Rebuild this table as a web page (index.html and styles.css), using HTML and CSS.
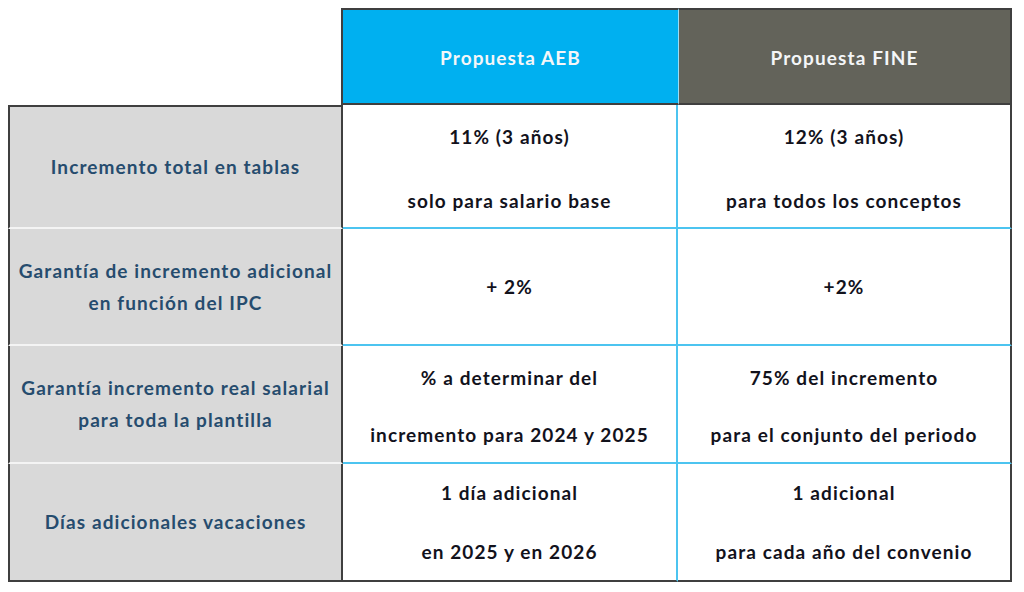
FILE: index.html
```html
<!DOCTYPE html>
<html lang="es">
<head>
<meta charset="utf-8">
<title>Propuestas AEB y FINE</title>
<link rel="stylesheet" href="styles.css">
</head>
<body>
<div class="sheet">
  <div class="corner"></div>
  <div class="head head-aeb">Propuesta AEB</div>
  <div class="head head-fine">Propuesta FINE</div>

  <div class="label label-first">Incremento total en tablas</div>
  <div class="cell cell-aeb cell-r1"><p>11% (3 años)</p><p>solo para salario base</p></div>
  <div class="cell cell-fine cell-r1"><p>12% (3 años)</p><p>para todos los conceptos</p></div>

  <div class="label label-two">Garantía de incremento adicional<br>en función del IPC</div>
  <div class="cell cell-aeb"><p>+ 2%</p></div>
  <div class="cell cell-fine"><p>+2%</p></div>

  <div class="label label-two">Garantía incremento real salarial<br>para toda la plantilla</div>
  <div class="cell cell-aeb cell-r3"><p>% a determinar del</p><p>incremento para 2024 y 2025</p></div>
  <div class="cell cell-fine cell-r3"><p>75% del incremento</p><p>para el conjunto del periodo</p></div>

  <div class="label label-last">Días adicionales vacaciones</div>
  <div class="cell cell-aeb cell-last cell-r4"><p>1 día adicional</p><p>en 2025 y en 2026</p></div>
  <div class="cell cell-fine cell-last cell-r4"><p>1 adicional</p><p>para cada año del convenio</p></div>
</div>
</body>
</html>
```

FILE: styles.css
```css
* { box-sizing: border-box; }

html, body {
  margin: 0;
  padding: 0;
  background: #ffffff;
}

body {
  font-family: Lato, "Open Sans", "Liberation Sans", sans-serif;
  font-weight: 700;
  font-size: 19px;
  letter-spacing: 1.1px;
}

.sheet {
  display: grid;
  grid-template-columns: 335px 335px 334px;
  grid-template-rows: 97px 124px 117px 118px 118px;
  margin: 8px 0 0 8px;
  width: 1004px;
}

.corner {
  border-right: 2px solid #3f3f3f;
}

.head {
  display: flex;
  align-items: center;
  justify-content: center;
  color: #f4f6f8;
  border-top: 2px solid #3f3f3f;
  border-bottom: 2px solid #3f3f3f;
  padding-top: 2px;
}

.head-aeb {
  background: #00b0f0;
}

.head-fine {
  background: #63635a;
  border-left: 1px solid #9adcf5;
  border-right: 2px solid #3f3f3f;
}

.label {
  display: flex;
  align-items: center;
  justify-content: center;
  text-align: center;
  background: #d9d9d9;
  color: #264c6e;
  border-left: 2px solid #3f3f3f;
  border-right: 2px solid #3f3f3f;
  border-bottom: 2px solid #f4f4f4;
  line-height: 32px;
}

.label-first {
  border-top: 2px solid #3f3f3f;
}

.label-last {
  border-bottom: 2px solid #3f3f3f;
}

.cell {
  display: flex;
  flex-direction: column;
  align-items: center;
  justify-content: center;
  color: #12121c;
  border-bottom: 2px solid #4cc4f0;
}

.cell p {
  margin: 0;
  line-height: 24px;
}

.cell-r1 { gap: 40px; padding-top: 5px; }
.cell-r3 { gap: 33px; padding-top: 4px; }
.cell-r4 { gap: 35px; padding-top: 1px; }

.cell-aeb {
  border-right: 2px solid #4cc4f0;
}

.cell-fine {
  border-right: 2px solid #3f3f3f;
}

.cell-last {
  border-bottom: 2px solid #3f3f3f;
}
```
